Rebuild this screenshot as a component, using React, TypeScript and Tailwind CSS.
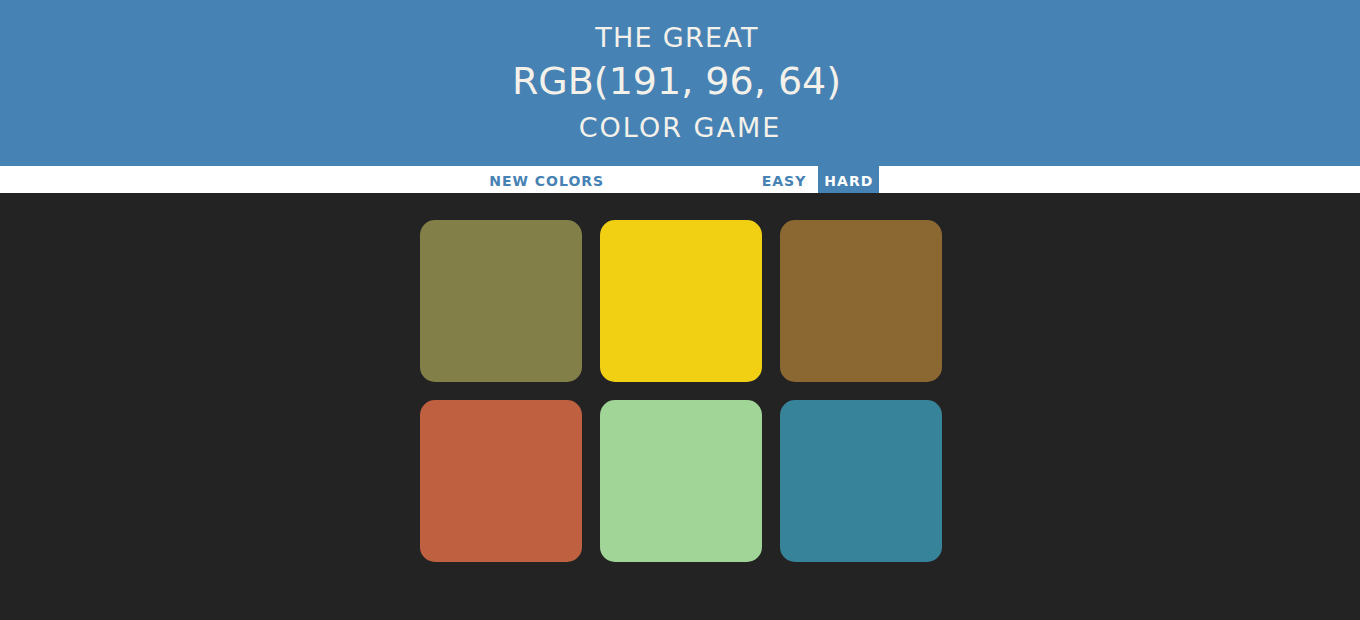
import { useState } from 'react';

const COLORS = ['#827f48', '#f1cf13', '#8b6732', '#bf6040', '#a1d497', '#37839a'];
const TARGET = 'RGB(191, 96, 64)';

export default function App() {
  const [hard, setHard] = useState(true);
  const btn = 'px-[6px] pt-[3px] uppercase font-bold tracking-[1px]';

  return (
    <div className="min-h-[620px] bg-[#232323] font-['DejaVu_Sans',sans-serif]">
      {/* Header */}
      <header className="h-[166px] bg-[#4682b4] text-[#f4f1ea] flex flex-col items-center pt-[24px] uppercase font-normal leading-none">
        <div className="text-[27px] tracking-[1.3px] pr-[6px]">The Great</div>
        <div className="text-[38px] mt-[11px] tracking-[0px] pr-[7px]">{TARGET}</div>
        <div className="text-[27px] mt-[14px] tracking-[2px]">Color Game</div>
      </header>

      {/* Stripe */}
      <nav className="h-[27px] bg-white flex justify-center items-stretch text-[14px] text-[#4682b4]">
        <button className={`${btn} w-[132px] tracking-[1.3px]`}>New Colors</button>
        <span className="w-[143px]" />
        <button
          onClick={() => setHard(false)}
          className={!hard ? `${btn} bg-[#4682b4] text-white` : btn}
        >
          Easy
        </button>
        <button
          onClick={() => setHard(true)}
          className={hard ? `${btn} ml-[6px] bg-[#4682b4] text-white` : `${btn} ml-[6px]`}
        >
          Hard
        </button>
      </nav>

      {/* Squares */}
      <div className="flex justify-center pt-[27px] pl-[1px]">
        <div className="grid grid-cols-3 gap-[18px]">
          {COLORS.slice(0, hard ? 6 : 3).map(c => (
            <div key={c} className="w-[162px] h-[162px] rounded-[15px]" style={{ background: c }} />
          ))}
        </div>
      </div>
    </div>
  );
}
